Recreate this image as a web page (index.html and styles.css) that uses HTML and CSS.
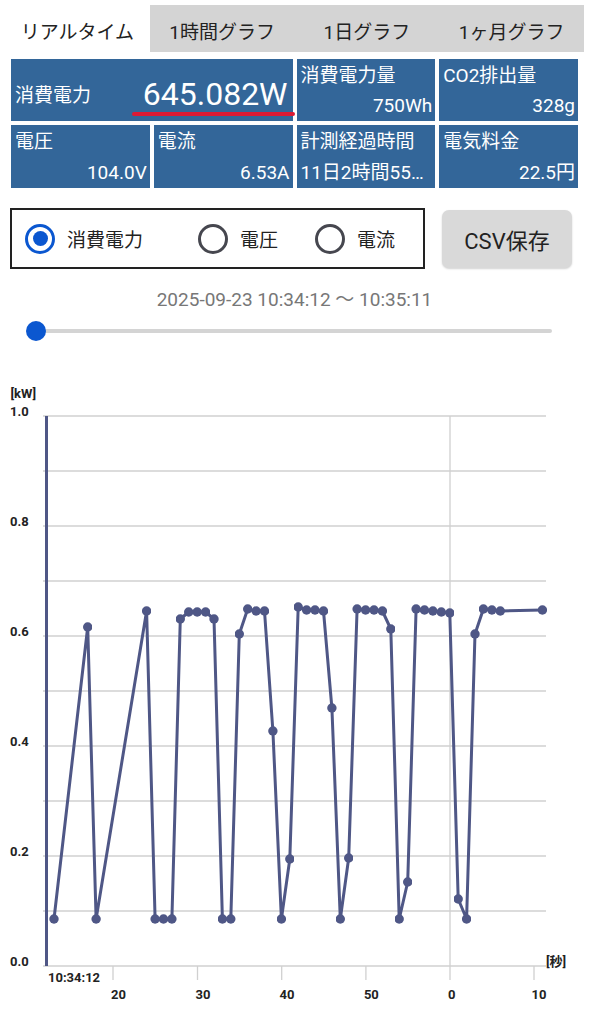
FILE: index.html
```html
<!DOCTYPE html>
<html lang="ja">
<head>
<meta charset="utf-8">
<title>電力モニター</title>
<link rel="stylesheet" href="styles.css">
</head>
<body>
<nav class="tabs">
  <div class="tab active">リアルタイム</div>
  <div class="tab">1時間グラフ</div>
  <div class="tab">1日グラフ</div>
  <div class="tab">1ヶ月グラフ</div>
</nav>

<section class="metrics">
  <div class="cell main">
    <span class="label main-label">消費電力</span>
    <span class="big-value">645.082W</span>
  </div>
  <div class="cell"><span class="label">消費電力量</span><span class="value">750Wh</span></div>
  <div class="cell"><span class="label">CO2排出量</span><span class="value">328g</span></div>
  <div class="cell"><span class="label">電圧</span><span class="value">104.0V</span></div>
  <div class="cell"><span class="label">電流</span><span class="value">6.53A</span></div>
  <div class="cell"><span class="label">計測経過時間</span><span class="value clip">11日2時間55…</span></div>
  <div class="cell"><span class="label">電気料金</span><span class="value">22.5円</span></div>
</section>

<section class="controls">
  <div class="radio-group">
    <div class="radio-item"><span class="radio checked"></span><span>消費電力</span></div>
    <div class="radio-item"><span class="radio"></span><span>電圧</span></div>
    <div class="radio-item"><span class="radio"></span><span>電流</span></div>
  </div>
  <button class="csv-btn">CSV保存</button>
</section>

<div class="range">2025-09-23 10:34:12 ～ 10:35:11</div>

<div class="slider"><div class="track"></div><div class="thumb"></div></div>

<svg class="chart" width="589" height="682" viewBox="0 342 589 682" xmlns="http://www.w3.org/2000/svg">
  <defs>
    <marker id="dot" viewBox="0 0 10 10" refX="5" refY="5" markerUnits="userSpaceOnUse" markerWidth="9.4" markerHeight="9.4">
      <circle cx="5" cy="5" r="5" class="dot"/>
    </marker>
  </defs>
  <g class="grid">
    <line x1="43" y1="417" x2="546" y2="417"/>
    <line x1="43" y1="472" x2="546" y2="472"/>
    <line x1="43" y1="527" x2="546" y2="527"/>
    <line x1="43" y1="582" x2="546" y2="582"/>
    <line x1="43" y1="637" x2="546" y2="637"/>
    <line x1="43" y1="692" x2="546" y2="692"/>
    <line x1="43" y1="747" x2="546" y2="747"/>
    <line x1="43" y1="802" x2="546" y2="802"/>
    <line x1="43" y1="857" x2="546" y2="857"/>
    <line x1="43" y1="912" x2="546" y2="912"/>
    <line x1="43" y1="967" x2="546" y2="967"/>
    <line x1="450" y1="417" x2="450" y2="981"/>
    <line x1="113" y1="967" x2="113" y2="981"/>
    <line x1="197.5" y1="967" x2="197.5" y2="981"/>
    <line x1="281.7" y1="967" x2="281.7" y2="981"/>
    <line x1="365.9" y1="967" x2="365.9" y2="981"/>
    <line x1="534" y1="967" x2="534" y2="981"/>
  </g>
  <g class="axis-text">
    <text x="10.5" y="399">[kW]</text>
    <text x="10" y="417">1.0</text>
    <text x="10" y="527">0.8</text>
    <text x="10" y="637">0.6</text>
    <text x="10" y="747">0.4</text>
    <text x="10" y="857">0.2</text>
    <text x="10" y="967">0.0</text>
    <text x="48" y="982.5">10:34:12</text>
    <text x="111" y="999.5">20</text>
    <text x="195.5" y="999.5">30</text>
    <text x="279.5" y="999.5">40</text>
    <text x="363.9" y="999.5">50</text>
    <text x="448" y="999.5">0</text>
    <text x="531.5" y="999.5">10</text>
    <text x="546" y="967">[秒]</text>
  </g>
  <line class="yaxis" x1="46.5" y1="417" x2="46.5" y2="967"/>
  <polyline class="series" points="54.0,920 87.7,628 96.1,920 146.6,612 155.1,920 163.5,920 171.9,920 180.3,620 188.7,613 197.2,613 205.6,613 214.0,620 222.4,920 230.8,920 239.3,635 247.7,610 256.1,612 264.5,612 272.9,732 281.4,920 289.8,860 298.2,608 306.6,611 315.0,611 323.5,612 331.9,709 340.3,920 348.7,859 357.1,610 365.6,611 374.0,611 382.4,612 390.8,630 399.2,920 407.7,883 416.1,610 424.5,611 432.9,612 441.3,613 449.8,614 458.2,900 466.6,920 475.0,635 483.4,610 491.9,611 500.3,612 542.4,611"/>
</svg>
</body>
</html>
```

FILE: styles.css
```css
* { box-sizing: border-box; }

body {
  margin: 0;
  width: 589px;
  background: #fff;
  font-family: Roboto, "Noto Sans CJK JP", sans-serif;
  color: #222;
}

/* Tabs */
.tabs {
  display: grid;
  grid-template-columns: repeat(4, 1fr);
  margin: 5px 5px 0;
  height: 47px;
}
.tab {
  display: flex;
  align-items: center;
  justify-content: center;
  padding-top: 4px;
  font-size: 19px;
  color: #222;
  background: #d4d4d4;
}
.tab.active { background: #fff; }

/* Metrics grid */
.metrics {
  display: grid;
  grid-template-columns: repeat(4, 1fr);
  grid-template-rows: 62px 63px;
  gap: 4px;
  margin: 7px 11px 0;
}
.cell {
  background: #336699;
  color: #fff;
  display: flex;
  flex-direction: column;
  justify-content: space-between;
  padding: 6px 3px 4px 4px;
  font-size: 19px;
  line-height: 22px;
  overflow: hidden;
  min-width: 0;
}
.label { white-space: nowrap; }
.value {
  text-align: right;
  white-space: nowrap;
  overflow: hidden;
}
.value.clip { text-align: left; }

.cell.main {
  grid-column: span 2;
  flex-direction: row;
  align-items: center;
  justify-content: space-between;
  padding-right: 5px;
  overflow: visible;
}
.main-label { margin-top: 9px; }
.big-value {
  position: relative;
  margin-top: 5px;
  font-size: 32px;
  line-height: 38px;
}
.big-value::after {
  content: "";
  position: absolute;
  left: -11px;
  right: -7px;
  bottom: -3px;
  height: 4px;
  border-radius: 2px;
  background: #dc1a34;
}

/* Controls */
.controls {
  display: flex;
  align-items: center;
  gap: 17px;
  margin-top: 20px;
  padding: 0 17px 0 10px;
}
.radio-group {
  width: 415px;
  height: 61px;
  border: 2px solid #222;
  display: grid;
  grid-template-columns: 173px 117px auto;
  align-items: center;
  padding-left: 13px;
}
.radio-item {
  display: flex;
  align-items: center;
  gap: 12px;
  font-size: 19px;
  color: #222;
}
.radio {
  width: 30px;
  height: 30px;
  border: 3px solid #46474f;
  border-radius: 50%;
  display: flex;
  align-items: center;
  justify-content: center;
  flex: none;
}
.radio.checked { border-color: #0b57d0; }
.radio.checked::after {
  content: "";
  width: 15px;
  height: 15px;
  border-radius: 50%;
  background: #0b57d0;
}
.csv-btn {
  flex: 1;
  height: 58px;
  border: none;
  border-radius: 7px;
  background: #d9d9d9;
  box-shadow: 0 1px 2px rgba(0, 0, 0, 0.18);
  font-family: inherit;
  font-size: 22px;
  font-weight: 400;
  color: #222;
  padding: 0;
}

/* Range text & slider */
.range {
  margin-top: 19px;
  line-height: 24px;
  font-size: 19px;
  color: #777;
  text-align: center;
}
.slider {
  position: relative;
  display: flex;
  align-items: center;
  height: 20px;
  margin: 9px 37px 0 36px;
}
.track {
  flex: 1;
  height: 4px;
  border-radius: 2px;
  background: #d4d4d4;
}
.thumb {
  position: absolute;
  left: -10px;
  top: 0;
  width: 20px;
  height: 20px;
  border-radius: 50%;
  background: #0b57d0;
}

/* Chart */
.chart { display: block; }
.grid line {
  stroke: #d0d0d0;
  stroke-width: 1.3;
}
.axis-text text {
  font-family: Roboto, "Noto Sans CJK JP", sans-serif;
  font-size: 13px;
  font-weight: 700;
  fill: #222;
}
.yaxis {
  stroke: #4f5786;
  stroke-width: 3;
}
.series {
  fill: none;
  stroke: #4f5786;
  stroke-width: 3;
  stroke-linejoin: round;
  marker-start: url(#dot);
  marker-mid: url(#dot);
  marker-end: url(#dot);
}
.dot { fill: #4f5786; }
```
